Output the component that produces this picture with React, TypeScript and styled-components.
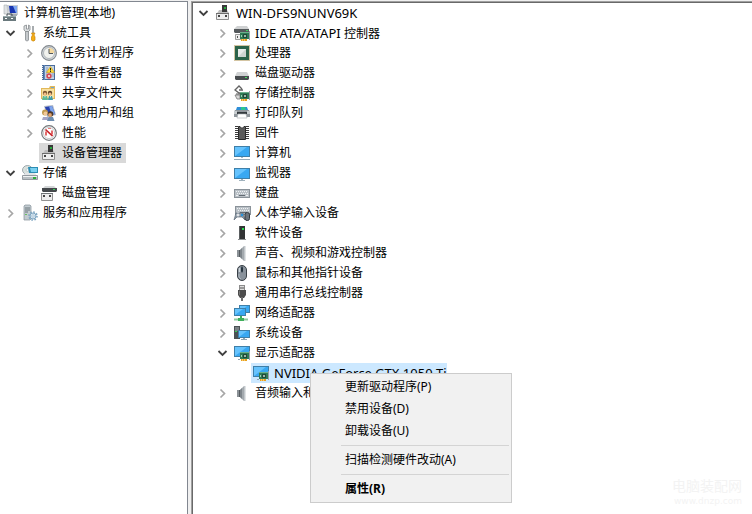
import React from "react";
import styled, { createGlobalStyle } from "styled-components";

const GlobalStyle = createGlobalStyle`
  * { box-sizing: border-box; }
  body {
    margin: 0;
    overflow: hidden;
    background: #f0f0f0;
    color: #000;
    font: 12px/20px "Noto Sans", "Noto Sans CJK SC", sans-serif;
  }
`;

const Window = styled.div`
  display: flex;
  gap: 3px;
  height: 100vh;
  padding-top: 1px;
`;

const SidePane = styled.nav`
  flex: 0 0 25%;
  min-width: 0;
  padding: 1px 0 0 1px;
  border: solid #828790;
  border-width: 1px 1px 0 0;
  background: #fff;
`;

const MainPane = styled.main`
  flex: 1 1 0;
  min-width: 0;
  padding: 1px 0 0 2px;
  border: solid #a0a0a0;
  border-width: 1px 0 0 1px;
  box-shadow: inset 1px 1px 0 #696969;
  background: #fff;
`;

const Tree = styled.ul`
  list-style: none;
  margin: 0;
  padding: 0;
`;

const Row = styled.li<{ $level: number }>`
  position: relative;
  display: flex;
  align-items: center;
  height: 20px;
  padding-left: ${(p) => p.$level * 19}px;
`;

const Toggle = styled.button`
  display: flex;
  align-items: center;
  justify-content: center;
  flex: none;
  width: 19px;
  height: 20px;
  padding: 0;
  border: 0;
  background: none;
`;

const Spacer = styled.span`
  flex: none;
  width: 19px;
`;

const Item = styled.button<{ $tone?: string; $latin?: boolean }>`
  display: flex;
  align-items: center;
  gap: 5px;
  height: 20px;
  padding: 0 ${(p) => (p.$latin ? 0 : 4)}px 0 2px;
  border: 0;
  color: inherit;
  font: inherit;
  font-size: ${(p) => (p.$latin ? 13 : 12)}px;
  white-space: nowrap;
  background: ${(p) => p.$tone || "transparent"};
`;

const Latin = styled.span`
  font-size: 13px;
`;

const Glyph = styled.svg`
  flex: none;
  width: 16px;
  height: 16px;
  overflow: visible;
`;

const Menu = styled.div`
  position: absolute;
  z-index: 1;
  top: 10px;
  left: 116px;
  width: 202px;
  padding: 2px;
  border: 1px solid #ccc;
  background: #f1f1f1;
`;

const MenuItem = styled.button<{ $strong?: boolean }>`
  display: block;
  width: 100%;
  height: 22px;
  padding: 0 0 0 32px;
  border: 0;
  background: none;
  color: inherit;
  font: inherit;
  font-weight: ${(p) => (p.$strong ? 700 : 400)};
  text-align: left;
`;

const Rule = styled.hr`
  height: 1px;
  margin: 3px 0 3px 28px;
  border: 0;
  background: #d4d4d4;
`;

const Watermark = styled.div`
  position: absolute;
  right: 10px;
  bottom: 6px;
  color: #f3f3f3;
  font-size: 14px;
  line-height: 16px;
  text-align: right;
`;

const Site = styled.div`
  font: 9px/14px "DejaVu Sans", sans-serif;
`;

const Monitor = ({ x = 0, y = 2, w = 16, h = 11 }) => (
  <g>
    <rect x={x} y={y} width={w} height={h} fill="#3f7fa8" />
    <rect x={x + 1} y={y + 1} width={w - 2} height={h - 2} fill="#38a8f2" />
    <path d={`M${x + 1} ${y + h - 1}V${y + 1}H${x + w - 3}Z`} fill="#66c3fd" />
  </g>
);

const Card = () => (
  <g>
    <path d="M15.500 6v9" stroke="#9aa0a5" />
    <rect x="6" y="7" width="9" height="7" fill="#2f7a55" />
    <path d="M6 7h9v1H6z" fill="#6bb08c" />
    <rect x="9" y="9" width="4" height="4" fill="#1f4a38" />
    <rect x="10" y="10" width="2" height="2" fill="#9db5aa" />
    <path d="M7 10h1v2H7z" fill="#9bd0b3" />
    <path d="M7 14h6v2H7z" fill="#e8a020" />
    <path d="M8.500 14v2M10.500 14v2" stroke="#ffe6a0" strokeWidth=".6" />
  </g>
);

const DeviceBox = () => (
  <g>
    <path d="M3 7l1-2h8l2 3H2z" fill="#bdbdbd" />
    <rect x="7" y="0" width="5" height="7" fill="#383838" />
    <rect x="9" y="2" width="2" height="2" fill="#28a83c" />
    <path d="M1.500 8.500h12v6h-12z" fill="#eee" stroke="#8f8f8f" />
    <path d="M1 8.500h13" stroke="#6d6d6d" />
    <path d="M3 10h2v2H3zM10 10h2v2h-2z" fill="#444" />
  </g>
);

const DriveTop = () => (
  <g>
    <path d="M0 4l3-3h10l2 3z" fill="#cfd1d2" />
    <path d="M0 4h15v3l-1 1H1L0 7z" fill="#55595c" />
    <rect x="12" y="5" width="2" height="1" fill="#3bd35b" />
  </g>
);

const Keys = () => (
  <g>
    <rect x="0" y="4" width="16" height="9" fill="#8a9299" />
    <rect x="1" y="5" width="14" height="7" fill="#b9c0c6" />
    <path d="M2 6.500h12M3 8.500h11" stroke="#eef1f3" strokeDasharray="1 1" />
    <path d="M2 10.500h2M12 10.500h2" stroke="#eef1f3" />
    <path d="M5 10.500h6" stroke="#626a72" />
  </g>
);

const art: Record<string, React.ReactNode> = {
  console: (
    <g>
      <path d="M4 0h11v10H6z" fill="#c9cdd3" />
      <path d="M6 1h8v7H7z" fill="#1a36b0" />
      <path d="M10 1h4v7h-1z" fill="#7fa8f2" />
      <path d="M1 0h3l1 9H1z" fill="#dfe2e4" stroke="#9aa1a6" strokeWidth=".5" />
      <path d="M8 9h6v2H7z" fill="#a6adb5" />
      <path d="M4 11V9h5v2" fill="none" stroke="#495358" />
      <rect x="0" y="11" width="13" height="5" fill="#6a797d" />
      <path d="M0 11h13v1H0z" fill="#99aaac" />
      <path d="M2 13h2v1H2zM8 13h2v1H8z" fill="#fff" />
    </g>
  ),
  tools: (
    <g>
      <path d="M2 1v4l2 2h2l2-2V1L6.500 0v4h-2V0z" fill="#dcdfe1" stroke="#858a8e" strokeWidth=".8" />
      <path d="M3.500 6.500h3V15l-1 1h-1l-1-1z" fill="#c5c9cc" stroke="#858a8e" strokeWidth=".8" />
      <path d="M11 1v7" stroke="#8b9095" strokeWidth="1.500" />
      <path d="M9.500 8h3.500l-1 2 1 2v3l-1 1h-1.500l-1-1v-3l1-2z" fill="#f5ae16" stroke="#c98408" strokeWidth=".7" />
    </g>
  ),
  clock: (
    <g>
      <circle cx="8" cy="8" r="7.400" fill="#d5dade" stroke="#83898e" strokeWidth="1.100" />
      <circle cx="8" cy="8" r="5.500" fill="#f1f2ee" stroke="#a5abb0" strokeWidth=".8" />
      <path d="M8 2.700A5.300 5.300 0 0 1 13.300 8H8z" fill="#f4d9a0" />
      <path d="M8 4v4.500h4" fill="none" stroke="#50565b" />
    </g>
  ),
  events: (
    <g>
      <rect x="1" y="0" width="13" height="15" fill="#4b6c9a" />
      <rect x="4" y="1" width="9" height="13" fill="#c3d2e4" />
      <path d="M1.500 1v14" stroke="#e8eef4" strokeDasharray="1 1" />
      <path d="M3.500 0v15" stroke="#5d88bf" />
      <path d="M5 3h2M5 5h2M5 7h2M5 9h1M11 9h2M11 11h2" stroke="#7e94ae" strokeWidth=".7" />
      <path d="M9.500 1.500l4 6h-8z" fill="#ffdb34" stroke="#c99c14" strokeWidth=".6" />
      <path d="M9.500 3v2.500M9.500 6v1" stroke="#302c1e" />
      <circle cx="8" cy="11" r="2.700" fill="#d64a50" />
      <path d="M7 10l2 2M9 10l-2 2" stroke="#fff" strokeWidth=".7" />
    </g>
  ),
  share: (
    <g>
      <path d="M0 3h8l1-2h5v13H0z" fill="#e2b95a" />
      <path d="M1 4h12v9H1z" fill="#f8e0a0" />
      <path d="M10 2h3v1h-3z" fill="#6ba6d6" />
      <circle cx="4" cy="8" r="2.200" fill="#7b5630" />
      <circle cx="9" cy="8" r="2.200" fill="#5d4228" />
      <circle cx="4" cy="9" r="1.500" fill="#efbd88" />
      <circle cx="9" cy="9" r="1.500" fill="#efbd88" />
      <path d="M1 15l1-4h4l1 4z" fill="#5eb894" />
      <path d="M7 15l1-4h3l1 4z" fill="#3e9ba8" />
      <path d="M3.500 11h1l-.5 2zM9 11h1l-.5 2z" fill="#fff" />
    </g>
  ),
  users: (
    <g>
      <path d="M3 1l9-1 3 10-9 2z" fill="#b4bcc8" />
      <path d="M4 2l7-1 3 8-7 2z" fill="#2842b0" />
      <path d="M8 1.500l3-.5 3 8-3 1z" fill="#7fa6ec" />
      <circle cx="4" cy="7.500" r="3" fill="#c09a50" />
      <circle cx="4.500" cy="8.500" r="2" fill="#f2c898" />
      <circle cx="9.500" cy="9" r="2.800" fill="#4f3928" />
      <circle cx="9" cy="10" r="1.900" fill="#dca270" />
      <path d="M1 15l1-3h5l1 3z" fill="#a6a5c4" />
      <path d="M6 16l1.500-4H12l1.500 4z" fill="#6e8eb0" />
    </g>
  ),
  gauge: (
    <g>
      <circle cx="8" cy="8" r="7.300" fill="#fff" stroke="#74787b" strokeWidth="1.200" />
      <circle cx="8" cy="8" r="5.600" fill="#fff" stroke="#b1b4b6" strokeWidth=".7" />
      <path d="M5 10.500V6.500M11 5.500v4" fill="none" stroke="#d83a3a" strokeWidth="1.500" />
      <path d="M4.500 4.500l7 6.500" stroke="#c91f25" strokeWidth="1.700" />
      <path d="M7 3.500h3" stroke="#e47a7a" />
    </g>
  ),
  device: <DeviceBox />,
  storage: (
    <g>
      <ellipse cx="5.500" cy="5" rx="5" ry="4.500" fill="#d9e2df" stroke="#8b979d" strokeWidth=".8" />
      <ellipse cx="5.500" cy="5" rx="1.500" ry="1.300" fill="#fff" stroke="#9aa6aa" strokeWidth=".5" />
      <path d="M6 2h10v6H7z" fill="#2b8db4" />
      <path d="M8 3h7v4H9z" fill="#79d0f0" />
      <path d="M1 11l2-3h10l2 3z" fill="#e2e5e7" />
      <path d="M.5 10.500h15v4H.500z" fill="#b9bfc3" stroke="#848c92" strokeWidth=".8" />
      <path d="M1 11.500h14" stroke="#f0f2f3" />
      <rect x="11" y="12" width="3" height="2" fill="#2fae3c" />
    </g>
  ),
  disk: (
    <g>
      <path d="M2 3l2-2h9l2 2z" fill="#d3d6d7" />
      <path d="M1 3h15v3l-1 1H2L1 6z" fill="#45494c" />
      <rect x="12" y="4" width="2" height="1" fill="#3bd35b" />
      <path d="M.5 8.500h11v7H.500z" fill="#eee" stroke="#929292" />
      <path d="M0 8.500h12" stroke="#6e7376" />
      <path d="M2 10h2v2H2zM8 10h2v2H8z" fill="#444" />
    </g>
  ),
  services: (
    <g>
      <path d="M2 1l1-1h5l1 1v13l-1 1H2z" fill="#c2cbd0" stroke="#84919a" strokeWidth=".7" />
      <path d="M3 3h5M3 5h5M3 7h3" stroke="#6a767d" />
      <path d="M3 9.500h2" stroke="#67bf60" />
      <circle cx="11" cy="11" r="4" fill="none" stroke="#7fa6c2" strokeWidth="1.600" strokeDasharray="1.600 1.500" />
      <circle cx="11" cy="11" r="3" fill="#d7e6f1" stroke="#7fa6c2" />
      <circle cx="11" cy="11" r="1.200" fill="#fff" stroke="#7fa6c2" strokeWidth=".6" />
    </g>
  ),
  ide: (
    <g>
      <DriveTop />
      <path d="M1.500 9.500h5v5h-5z" fill="#eee" stroke="#858585" strokeWidth=".8" />
      <rect x="3" y="11" width="1" height="2" fill="#555" />
      <Card />
    </g>
  ),
  cpu: (
    <g>
      <rect x=".5" y=".5" width="15" height="15" fill="none" stroke="#a88b46" strokeDasharray="1 1" />
      <rect x="1" y="1" width="14" height="14" fill="#2c6349" />
      <rect x="4" y="4" width="8" height="8" fill="#cfd5d1" />
      <path d="M4 12V4h8z" fill="#e9ecea" />
    </g>
  ),
  drive: (
    <g>
      <path d="M3 7h10l2 4H1z" fill="#d0d2d3" />
      <path d="M1 11h14v3l-1 1H2l-1-1z" fill="#484c4f" />
      <rect x="11" y="12" width="2" height="1" fill="#47dd62" />
    </g>
  ),
  controller: (
    <g>
      <path d="M8 4L5 1 1 5l4 3h4M5 5h4" fill="none" stroke="#636363" strokeWidth="1.300" />
      <path d="M1 10l2 4h3v-4z" fill="#d8d8d8" stroke="#777" strokeWidth=".8" />
      <path d="M2 9h4" stroke="#555" />
      <Card />
    </g>
  ),
  printer: (
    <g>
      <path d="M3 2h10l1 3H2z" fill="#2f8fd8" />
      <path d="M7 2h4l1 3H7z" fill="#2fc58f" />
      <path d="M1 5h14l1 2v5H0V7z" fill="#8f969b" />
      <path d="M0 6h3v3H0zM13 6h3v3h-3z" fill="#c8cdd0" />
      <path d="M3 7h10v2H3z" fill="#33393d" />
      <path d="M4 9h8l1 4H3z" fill="#fff" stroke="#a4abb0" strokeWidth=".6" />
    </g>
  ),
  firmware: (
    <g>
      <path d="M2.500 1v14M13.500 1v14" stroke="#3c3c3c" strokeWidth="3" strokeDasharray="1 1" />
      <path d="M4.500 1.500H6l2 2 2-2h1.500v13h-7z" fill="#5b5b5b" stroke="#2b2b2b" />
    </g>
  ),
  computer: (
    <g>
      <Monitor y={1} />
      <path d="M7 12h2v1H7z" fill="#a5bac8" />
      <path d="M0 14.500h16" stroke="#96aab9" />
    </g>
  ),
  monitor: (
    <g>
      <Monitor y={3} />
      <path d="M7 14h2v1H7zM5 15h6v1H5z" fill="#a0b2bd" />
    </g>
  ),
  keyboard: <Keys />,
  hid: (
    <g>
      <g transform="translate(1 -3)"><Keys /></g>
      <path d="M0 15l2-7h7l2 7-3-3H3z" fill="#8a97a3" stroke="#5e6c79" strokeWidth=".7" />
      <path d="M4 8.500v3M2.500 10h3" stroke="#fff" />
      <circle cx="8" cy="10" r="1.200" fill="#2593df" />
      <rect x="11" y="7.500" width="4.500" height="8" rx="2" fill="#6c747c" stroke="#30373d" />
    </g>
  ),
  software: (
    <g>
      <path d="M5 1h6v13H5z" fill="#323435" />
      <path d="M5 1h1v13H5z" fill="#5a5d5f" />
      <rect x="8" y="3" width="2" height="2" fill="#24dc49" />
      <path d="M4 14h8v1H4z" fill="#8d9092" />
    </g>
  ),
  speaker: (
    <g>
      <path d="M3 5h2v7H3z" fill="#8b9196" />
      <path d="M5 5h1v7H5z" fill="#555b60" />
      <path d="M6 5l4-4v15l-4-4z" fill="#a3a9ae" />
      <path d="M6 5l2-2v11l-2-2z" fill="#7f868c" />
      <path d="M10 1h1.500v15H10z" fill="#c2c7cb" />
    </g>
  ),
  mouse: (
    <g>
      <rect x="3.500" y=".5" width="9" height="15" rx="4.500" fill="#89929b" stroke="#3a4147" />
      <path d="M5.500 3v4" stroke="#cdd4da" strokeWidth="1.500" />
      <path d="M5 9v3l2 2" fill="none" stroke="#aeb6bd" />
      <path d="M8 1v7" stroke="#444c54" strokeWidth=".7" />
      <rect x="7" y="2" width="2" height="5" rx="1" fill="#25343f" />
    </g>
  ),
  usb: (
    <g>
      <rect x="5.500" y=".5" width="5" height="5" fill="#dcdcdc" stroke="#8b8b8b" />
      <path d="M6.500 2h1v2h-1zM8.500 2h1v2h-1z" fill="#555" />
      <path d="M4 5h8v5l-2 3H6l-2-3z" fill="#4d4d4d" />
      <path d="M5 6h1v4H5z" fill="#777" />
      <path d="M8 12v4" stroke="#6c6c6c" strokeWidth="2" />
    </g>
  ),
  network: (
    <g>
      <Monitor x={5} y={0} w={11} h={8} />
      <Monitor x={0} y={3} w={12} h={8} />
      <path d="M6 11h2v2h2v3H4v-3h2z" fill="#3fae5c" />
      <path d="M0 14.500h4M10 14.500h4" stroke="#8fcaa0" strokeWidth="2" />
    </g>
  ),
  system: (
    <g>
      <path d="M0 1h6v13H0z" fill="#4b5155" />
      <path d="M1 3h4M1 5h4" stroke="#a9b0b4" />
      <rect x="1" y="6" width="2" height="1" fill="#35cf57" />
      <Monitor x={4} y={5} w={12} h={8} />
      <path d="M9 13h2v1H9zM7 14h6v1H7z" fill="#91a5b1" />
    </g>
  ),
  display: (
    <g>
      <Monitor y={1} />
      <path d="M4 14h2v1H4z" fill="#91a5b1" />
      <Card />
    </g>
  ),
};

type TreeNode = {
  icon: string;
  label: React.ReactNode;
  name?: string;
  level: number;
  open?: boolean;
  leaf?: boolean;
  root?: boolean;
  latin?: boolean;
  tone?: string;
  menu?: boolean;
};

const consoleNodes: TreeNode[] = [
  { icon: "console", label: "计算机管理(本地)", level: 0, root: true },
  { icon: "tools", label: "系统工具", level: 0, open: true },
  { icon: "clock", label: "任务计划程序", level: 1 },
  { icon: "events", label: "事件查看器", level: 1 },
  { icon: "share", label: "共享文件夹", level: 1 },
  { icon: "users", label: "本地用户和组", level: 1 },
  { icon: "gauge", label: "性能", level: 1 },
  { icon: "device", label: "设备管理器", level: 1, leaf: true, tone: "#d9d9d9" },
  { icon: "storage", label: "存储", level: 0, open: true },
  { icon: "disk", label: "磁盘管理", level: 1, leaf: true },
  { icon: "services", label: "服务和应用程序", level: 0 },
];

const categories: [string, React.ReactNode][] = [
  ["ide", <><Latin>IDE ATA/ATAPI </Latin>控制器</>],
  ["cpu", "处理器"],
  ["drive", "磁盘驱动器"],
  ["controller", "存储控制器"],
  ["printer", "打印队列"],
  ["firmware", "固件"],
  ["computer", "计算机"],
  ["monitor", "监视器"],
  ["keyboard", "键盘"],
  ["hid", "人体学输入设备"],
  ["software", "软件设备"],
  ["speaker", "声音、视频和游戏控制器"],
  ["mouse", "鼠标和其他指针设备"],
  ["usb", "通用串行总线控制器"],
  ["network", "网络适配器"],
  ["system", "系统设备"],
];

const deviceNodes: TreeNode[] = [
  { icon: "device", label: "WIN-DFS9NUNV69K", level: 0, open: true, latin: true },
  ...categories.map(([icon, label]) => ({ icon, label, level: 1 })),
  { icon: "display", label: "显示适配器", level: 1, open: true },
  { icon: "display", label: "NVIDIA GeForce GTX 1050 Ti", level: 2, leaf: true, latin: true, tone: "#cce8ff", menu: true },
  { icon: "speaker", label: "音频输入和输出", level: 1 },
];

const Chevron = ({ open }: { open?: boolean }) => (
  <svg width="11" height="11" viewBox="0 0 11 11" fill="none" stroke={open ? "#404040" : "#a6a6a6"} strokeWidth={open ? 1.8 : 1.7}>
    <path d={open ? "M1.500 3l4 4 4-4" : "M3.500 1.500l4 4-4 4"} />
  </svg>
);

const ContextMenu = () => (
  <Menu role="menu">
    <MenuItem role="menuitem">更新驱动程序(P)</MenuItem>
    <MenuItem role="menuitem">禁用设备(D)</MenuItem>
    <MenuItem role="menuitem">卸载设备(U)</MenuItem>
    <Rule />
    <MenuItem role="menuitem">扫描检测硬件改动(A)</MenuItem>
    <Rule />
    <MenuItem role="menuitem" $strong>属性(R)</MenuItem>
  </Menu>
);

const TreeView = ({ nodes, label }: { nodes: TreeNode[]; label: string }) => (
  <Tree aria-label={label}>
    {nodes.map((n, i) => (
      <Row key={i} $level={n.level}>
        {n.root ? null : n.leaf ? (
          <Spacer />
        ) : (
          <Toggle aria-label={n.open ? "折叠" : "展开"} aria-expanded={!!n.open}>
            <Chevron open={n.open} />
          </Toggle>
        )}
        <Item $tone={n.tone} $latin={n.latin}>
          <Glyph viewBox="0 0 16 16" aria-hidden="true">{art[n.icon]}</Glyph>
          <span>{n.label}</span>
        </Item>
        {n.menu && <ContextMenu />}
      </Row>
    ))}
  </Tree>
);

export default function App() {
  return (
    <>
      <GlobalStyle />
      <Window>
        <SidePane>
          <TreeView nodes={consoleNodes} label="计算机管理" />
        </SidePane>
        <MainPane>
          <TreeView nodes={deviceNodes} label="设备管理器" />
        </MainPane>
        <Watermark>
          电脑装配网
          <Site>www.dnzp.com</Site>
        </Watermark>
      </Window>
    </>
  );
}
